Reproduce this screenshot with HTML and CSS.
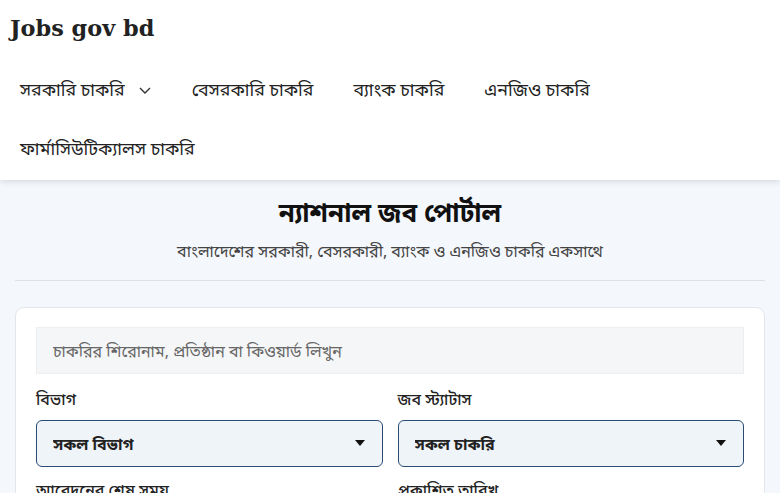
FILE: index.html
```html
<!DOCTYPE html>
<html lang="bn">

    <head>
        <meta charset="UTF-8">
        <meta name="viewport" content="width=device-width, initial-scale=1.0">
        <title>Jobs gov bd</title>
        <link rel="stylesheet" href="styles.css">
    </head>

    <body>
        <header class="siteHeader">
            <h1 class="brand">Jobs gov bd</h1>
            <nav class="mainNav">
                <a href="#" class="navItem">
                    সরকারি চাকরি
                    <svg class="chevron" width="14" height="14" viewBox="0 0 14 14">
                        <path d="M 2 5 L 7 10 L 12 5" fill="none" stroke="#333" stroke-width="1.4"></path>
                    </svg>
                </a>
                <a href="#" class="navItem">বেসরকারি চাকরি</a>
                <a href="#" class="navItem">ব্যাংক চাকরি</a>
                <a href="#" class="navItem">এনজিও চাকরি</a>
                <a href="#" class="navItem">ফার্মাসিউটিক্যালস চাকরি</a>
            </nav>
        </header>

        <main class="page">
            <div class="intro">
                <h2 class="title">ন্যাশনাল জব পোর্টাল</h2>
                <p class="desc">বাংলাদেশের সরকারী, বেসরকারী, ব্যাংক ও এনজিও চাকরি একসাথে</p>
            </div>

            <form class="searchCard">
                <input type="text" class="searchInput" placeholder="চাকরির শিরোনাম, প্রতিষ্ঠান বা কিওয়ার্ড লিখুন">

                <div class="filters">
                    <label class="field">
                        <span class="label">বিভাগ</span>
                        <span class="selectWrap">
                            <select>
                                <option>সকল বিভাগ</option>
                                <option>ঢাকা</option>
                                <option>চট্টগ্রাম</option>
                            </select>
                        </span>
                    </label>
                    <label class="field">
                        <span class="label">জব স্ট্যাটাস</span>
                        <span class="selectWrap">
                            <select>
                                <option>সকল চাকরি</option>
                                <option>চলমান</option>
                            </select>
                        </span>
                    </label>
                    <label class="field">
                        <span class="label">আবেদনের শেষ সময়</span>
                        <span class="selectWrap">
                            <select>
                                <option>যেকোনো সময়</option>
                            </select>
                        </span>
                    </label>
                    <label class="field">
                        <span class="label">প্রকাশিত তারিখ</span>
                        <span class="selectWrap">
                            <select>
                                <option>যেকোনো তারিখ</option>
                            </select>
                        </span>
                    </label>
                </div>
            </form>
        </main>
    </body>

</html>
```

FILE: styles.css
```css
* {
    box-sizing: border-box;
}

body {
    margin: 0;
    background: #f4f7fb;
    color: #222;
    font-family: "Noto Sans", "Noto Sans Bengali", sans-serif;
}

.siteHeader {
    background: #ffffff;
    padding: 12px 0 2px;
    box-shadow: 0 2px 6px rgba(0, 0, 0, 0.12);
    position: relative;
    z-index: 2;
}

.brand {
    margin: 0 0 16px;
    padding: 0 10px;
    font-family: "DejaVu Serif", "Liberation Serif", serif;
    font-size: 22.4px;
    line-height: 32px;
    font-weight: bold;
    color: #222;
}

.mainNav {
    display: flex;
    flex-wrap: wrap;
}

.navItem {
    display: flex;
    align-items: center;
    gap: 13px;
    height: 59px;
    padding: 0 20px;
    font-size: 17.8px;
    color: #222;
    text-decoration: none;
}

.chevron {
    margin-top: 1px;
}

.page {
    padding: 15px 15px 0;
}

.intro {
    text-align: center;
    padding-bottom: 17px;
    border-bottom: 1px solid #dde1e6;
    margin-bottom: 26px;
}

.title {
    margin: 0 0 10px;
    font-size: 26px;
    line-height: 34px;
    font-weight: bold;
    color: #111;
}

.desc {
    margin: 0;
    font-size: 16px;
    line-height: 24px;
    color: #444;
}

.searchCard {
    background: #ffffff;
    border: 1px solid #e3e6ea;
    border-radius: 9px;
    padding: 20px;
}

.searchInput {
    display: block;
    width: 100%;
    height: 47px;
    margin-top: -1px;
    padding: 0 16px;
    border: 1px solid #eceef0;
    background: #f5f6f7;
    font-family: inherit;
    font-size: 16px;
    color: #333;
    outline: none;
}

.searchInput::placeholder {
    color: #666;
}

.filters {
    display: grid;
    grid-template-columns: 1fr 1fr;
    column-gap: 15px;
    row-gap: 11px;
    margin-top: 13px;
}

.field {
    display: flex;
    flex-direction: column;
    gap: 9px;
}

.label {
    font-size: 16px;
    line-height: 24px;
    font-weight: 500;
    color: #222;
}

.selectWrap {
    position: relative;
    display: block;
}

.selectWrap::after {
    content: "";
    position: absolute;
    right: 18px;
    top: 20px;
    border-left: 5px solid transparent;
    border-right: 5px solid transparent;
    border-top: 6px solid #111;
    pointer-events: none;
}

.selectWrap select {
    appearance: none;
    display: block;
    width: 100%;
    height: 47px;
    padding: 0 16px;
    border: 1px solid #2a4b72;
    border-radius: 6px;
    background: #eff4f9;
    font-family: inherit;
    font-size: 16px;
    font-weight: bold;
    color: #222;
    outline: none;
}
```
